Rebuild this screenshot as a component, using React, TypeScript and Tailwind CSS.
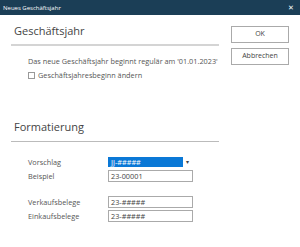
export default function App() {
  return (
    <div className="w-[300px] h-[247px] bg-white overflow-hidden flex flex-col" style={{ fontFamily: '"Open Sans", "Noto Sans", sans-serif' }}>
      {/* title bar */}
      <div className="h-[15px] bg-[#1b3e56] flex items-center justify-between px-[3px]">
        <span className="text-[6px] text-white leading-none">Neues Geschäftsjahr</span>
        <span className="text-[7px] text-white leading-none pr-[3px]">✕</span>
      </div>

      <div className="flex flex-1">
        <div className="w-[219px] pl-[11px]">
          <div className="pt-[9px] pl-[3px] text-[11px] text-[#444] leading-[14px]">Geschäftsjahr</div>
          <div className="mt-[6px] h-[2px] bg-[#d4d4d4]" />
          <div className="pl-[17px] pt-[11px] text-[7.3px] text-[#555] leading-[9px]">
            Das neue Geschäftsjahr beginnt regulär am '01.01.2023'
          </div>
          <div className="pl-[17px] pt-[5px] flex items-center gap-[3px] text-[7.3px] text-[#555] leading-[9px]">
            <span className="w-[7px] h-[7px] border border-[#999] bg-white" />
            Geschäftsjahresbeginn ändern
          </div>

          <div className="pt-[40px] pl-[3px] text-[11px] text-[#444] leading-[14px]">Formatierung</div>
          <div className="mt-[7px] h-px bg-[#bbb]" />

          <div className="pl-[17px] pt-[15px] flex flex-col text-[7.3px] text-[#555]">
            <div className="flex items-center h-[10px]">
              <span className="w-[80px]">Vorschlag</span>
              <div className="w-[75px] h-[10px] bg-[#0a78d6] text-white px-[3px] leading-[10px]">JJ-#####</div>
              <span className="ml-[3px] text-[6px] text-[#444]">▾</span>
            </div>
            <div className="flex items-center mt-[3px] h-[12px]">
              <span className="w-[80px]">Beispiel</span>
              <div className="w-[85px] h-[12px] border border-[#aaa] px-[2px] leading-[10px] text-[#444]">23-00001</div>
            </div>
            <div className="flex items-center mt-[14px] h-[12px]">
              <span className="w-[80px]">Verkaufsbelege</span>
              <div className="w-[85px] h-[12px] border border-[#aaa] px-[2px] leading-[10px] text-[#444]">23-#####</div>
            </div>
            <div className="flex items-center mt-[2px] h-[12px]">
              <span className="w-[80px]">Einkaufsbelege</span>
              <div className="w-[85px] h-[12px] border border-[#aaa] px-[2px] leading-[10px] text-[#444]">23-#####</div>
            </div>
          </div>
        </div>

        <div className="flex flex-col pl-[12px] pt-[11px] gap-[5px]">
          <button className="w-[58px] h-[17px] border border-[#aaa] bg-white text-[7px] text-[#444]">OK</button>
          <button className="w-[58px] h-[17px] border border-[#aaa] bg-white text-[7px] text-[#444]">Abbrechen</button>
        </div>
      </div>
    </div>
  );
}
